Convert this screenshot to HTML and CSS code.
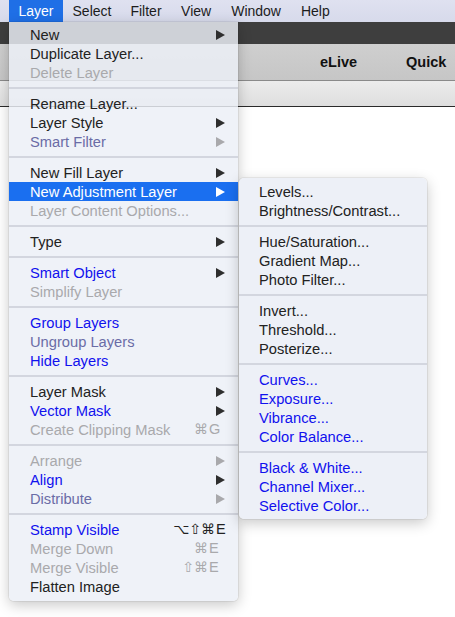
FILE: index.html
```html
<!DOCTYPE html>
<html>
<head>
<meta charset="utf-8">
<link rel="stylesheet" href="styles.css">
</head>
<body>
<div class="screen">
  <div class="menubar">
    <span class="mb-item active">Layer</span>
    <span class="mb-item">Select</span>
    <span class="mb-item">Filter</span>
    <span class="mb-item">View</span>
    <span class="mb-item">Window</span>
    <span class="mb-item">Help</span>
  </div>
  <div class="darkbar"></div>
  <div class="toolbar"><span class="tb-item">eLive</span><span class="tb-item">Quick</span></div>
  <div class="subbar"></div>
  <div class="canvas"></div>

  <div class="menu main-menu">
    <div class="row"><span class="label">New</span><span class="arrow"></span></div>
    <div class="row"><span class="label">Duplicate Layer...</span></div>
    <div class="row disabled"><span class="label">Delete Layer</span></div>
    <div class="sep"></div>
    <div class="row"><span class="label">Rename Layer...</span></div>
    <div class="row"><span class="label">Layer Style</span><span class="arrow"></span></div>
    <div class="row dimblue"><span class="label">Smart Filter</span><span class="arrow dim"></span></div>
    <div class="sep"></div>
    <div class="row"><span class="label">New Fill Layer</span><span class="arrow"></span></div>
    <div class="row selected"><span class="label">New Adjustment Layer</span><span class="arrow"></span></div>
    <div class="row disabled"><span class="label">Layer Content Options...</span></div>
    <div class="sep"></div>
    <div class="row"><span class="label">Type</span><span class="arrow"></span></div>
    <div class="sep"></div>
    <div class="row blue"><span class="label">Smart Object</span><span class="arrow"></span></div>
    <div class="row disabled"><span class="label">Simplify Layer</span></div>
    <div class="sep"></div>
    <div class="row blue"><span class="label">Group Layers</span></div>
    <div class="row dimblue"><span class="label">Ungroup Layers</span></div>
    <div class="row blue"><span class="label">Hide Layers</span></div>
    <div class="sep"></div>
    <div class="row"><span class="label">Layer Mask</span><span class="arrow"></span></div>
    <div class="row blue"><span class="label">Vector Mask</span><span class="arrow"></span></div>
    <div class="row disabled"><span class="label">Create Clipping Mask</span><span class="shortcut"><span class="mods">⌘</span><span class="key">G</span></span></div>
    <div class="sep"></div>
    <div class="row disabled"><span class="label">Arrange</span><span class="arrow dim"></span></div>
    <div class="row blue"><span class="label">Align</span><span class="arrow"></span></div>
    <div class="row dimblue"><span class="label">Distribute</span><span class="arrow dim"></span></div>
    <div class="sep"></div>
    <div class="row blue"><span class="label">Stamp Visible</span><span class="shortcut wide"><span class="mods">⌥⇧⌘</span><span class="key">E</span></span></div>
    <div class="row disabled"><span class="label">Merge Down</span><span class="shortcut"><span class="mods">⌘</span><span class="key">E</span></span></div>
    <div class="row disabled"><span class="label">Merge Visible</span><span class="shortcut"><span class="mods">⇧⌘</span><span class="key">E</span></span></div>
    <div class="row"><span class="label">Flatten Image</span></div>
  </div>

  <div class="menu sub-menu">
    <div class="row"><span class="label">Levels...</span></div>
    <div class="row"><span class="label">Brightness/Contrast...</span></div>
    <div class="sep"></div>
    <div class="row"><span class="label">Hue/Saturation...</span></div>
    <div class="row"><span class="label">Gradient Map...</span></div>
    <div class="row"><span class="label">Photo Filter...</span></div>
    <div class="sep"></div>
    <div class="row"><span class="label">Invert...</span></div>
    <div class="row"><span class="label">Threshold...</span></div>
    <div class="row"><span class="label">Posterize...</span></div>
    <div class="sep"></div>
    <div class="row blue"><span class="label">Curves...</span></div>
    <div class="row blue"><span class="label">Exposure...</span></div>
    <div class="row blue"><span class="label">Vibrance...</span></div>
    <div class="row blue"><span class="label">Color Balance...</span></div>
    <div class="sep"></div>
    <div class="row blue"><span class="label">Black &amp; White...</span></div>
    <div class="row blue"><span class="label">Channel Mixer...</span></div>
    <div class="row blue"><span class="label">Selective Color...</span></div>
  </div>
</div>
</body>
</html>
```
FILE: styles.css
```css
* { box-sizing: border-box; }
html, body { margin: 0; padding: 0; background: #ffffff; }
body {
  font-family: "Liberation Sans", "DejaVu Sans", Arial, sans-serif;
  font-size: 14px;
  color: #222;
}
.screen {
  position: relative;
  width: 455px;
  height: 617px;
  overflow: hidden;
  display: flex;
  flex-direction: column;
}
.menubar {
  height: 22px;
  background: linear-gradient(#dfe1f0, #d7daeb);
  display: flex;
  align-items: stretch;
  padding-left: 9px;
  font-size: 14px;
}
.mb-item {
  padding: 0 9.5px;
  line-height: 22px;
  color: #1c1c1c;
}
.mb-item:nth-child(n+4) { padding: 0 10px; }
.mb-item.active {
  background: #1f6fe6;
  color: #fff;
  padding: 0 9.5px;
}
.darkbar {
  height: 22px;
  background: #3e3e3e;
}
.toolbar {
  height: 37px;
  background: linear-gradient(#cfcfcf, #c6c6c6);
  border-bottom: 1px solid #8a8a8a;
  display: flex;
  align-items: center;
  padding-left: 320px;
  gap: 49px;
}
.tb-item {
  font-weight: bold;
  color: #111;
  font-size: 14.5px;
}
.subbar {
  height: 26px;
  background: linear-gradient(#ececec, #dedede);
  border-bottom: 1px solid #2a2a2a;
}
.canvas {
  flex: 1;
  background: #fff;
}

.menu {
  position: absolute;
  background: rgba(236, 239, 247, 0.83);
  box-shadow: 0 4px 14px rgba(0, 0, 0, 0.22), 0 0 0 1px rgba(0, 0, 0, 0.06);
  font-size: 14.7px;
}
.main-menu {
  left: 9px;
  top: 22px;
  width: 229px;
  padding: 3px 0 5px;
  border-radius: 0 0 5px 5px;
}
.sub-menu {
  left: 239px;
  top: 178px;
  width: 188px;
  padding: 4px 0 4px;
  border-radius: 5px;
  background: rgba(236, 239, 247, 0.97);
}
.row {
  height: 19px;
  line-height: 19px;
  display: flex;
  align-items: center;
  padding-left: 21px;
  padding-right: 13px;
  white-space: nowrap;
  color: #222;
}
.sub-menu .row { padding-left: 20px; }
.row .label { flex: 1; padding-top: 1px; }
.row.blue { color: #1111ee; }
.row.dimblue { color: #6a6ca6; }
.row.disabled { color: #a9a9ac; }
.row.selected { background: #1a6ff0; color: #fff; }
.arrow {
  width: 0;
  height: 0;
  border-top: 5px solid transparent;
  border-bottom: 5px solid transparent;
  border-left: 9px solid #2e2e2e;
}
.arrow.dim { border-left-color: #a9a9ac; }
.row.selected .arrow { border-left-color: #fff; }
.shortcut {
  display: flex;
  font-family: "DejaVu Sans", "Liberation Sans", sans-serif;
  font-size: 14px;
  margin-right: 5px;
}
.shortcut.wide { margin-right: -2px; color: #222; }
.shortcut .mods { text-align: right; }
.shortcut .key {
  width: 12px;
  text-align: left;
  padding-left: 1px;
  font-family: "Liberation Sans", sans-serif;
  font-size: 14.5px;
}
.sep {
  height: 2px;
  margin: 5px 0;
  background: rgba(200, 202, 212, 0.7);
}
```
